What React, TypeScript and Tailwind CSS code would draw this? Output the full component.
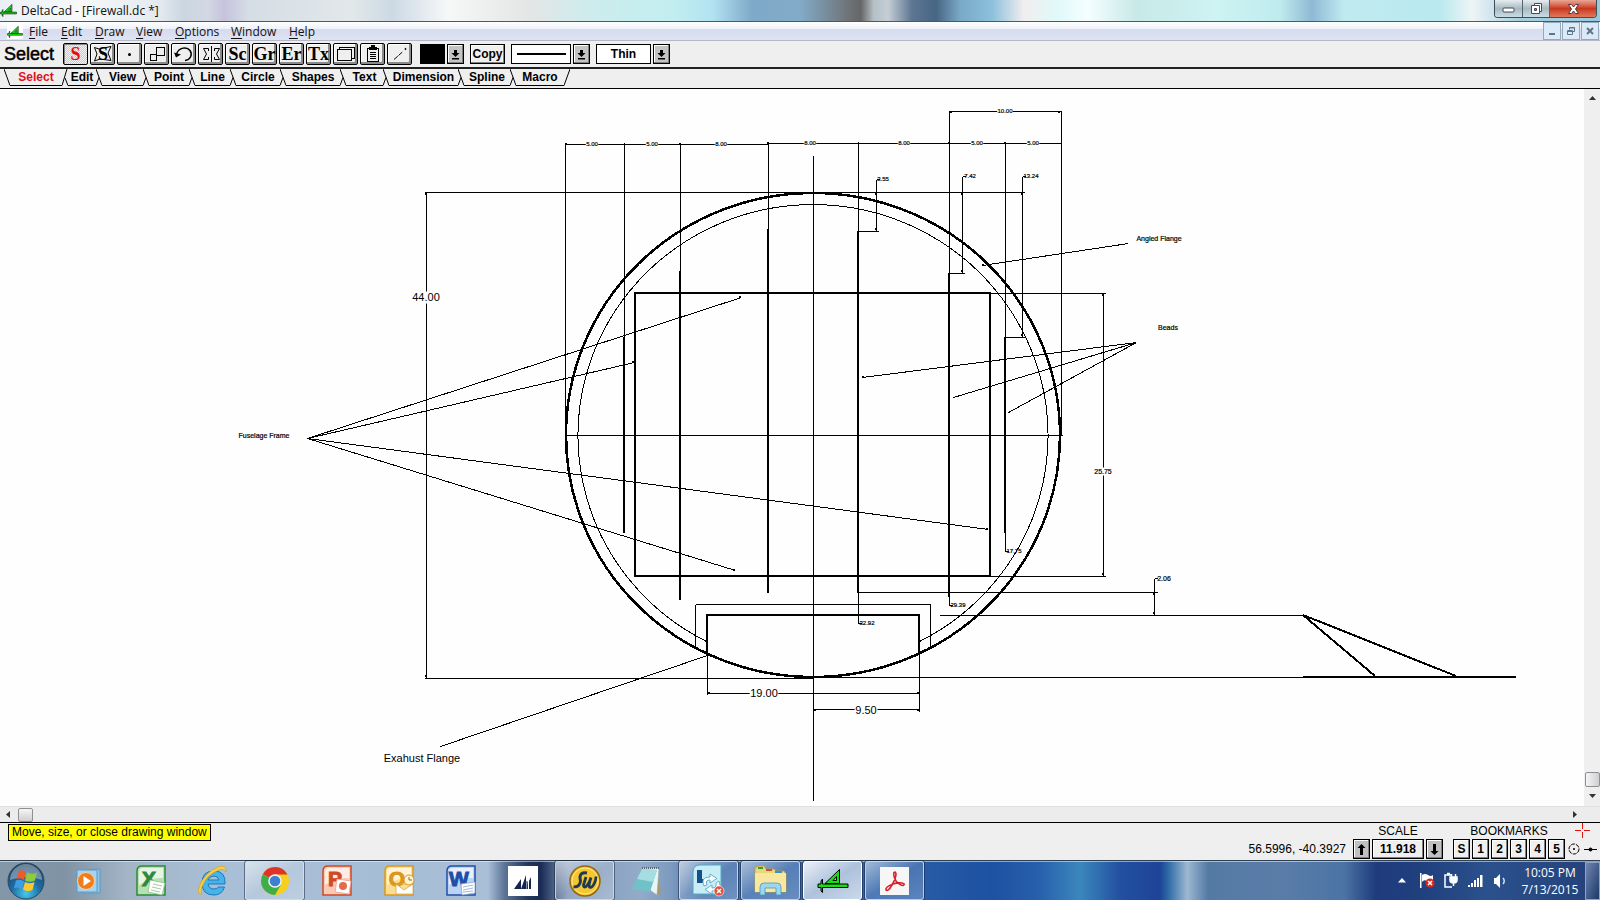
import React, { useState } from 'react';
import clsx from 'clsx';

const menus = [
  { label: 'File', width: 'w-[32px]' },
  { label: 'Edit', width: 'w-[34px]' },
  { label: 'Draw', width: 'w-[41px]' },
  { label: 'View', width: 'w-[39px]' },
  { label: 'Options', width: 'w-[56px]' },
  { label: 'Window', width: 'w-[58px]' },
  { label: 'Help', width: 'w-[40px]' },
];

const tabs = [
  { label: 'Select', width: 'w-[52px]' },
  { label: 'Edit', width: 'w-[28px]' },
  { label: 'View', width: 'w-[41px]' },
  { label: 'Point', width: 'w-[40px]' },
  { label: 'Line', width: 'w-[35px]' },
  { label: 'Circle', width: 'w-[44px]' },
  { label: 'Shapes', width: 'w-[54px]' },
  { label: 'Text', width: 'w-[37px]' },
  { label: 'Dimension', width: 'w-[69px]' },
  { label: 'Spline', width: 'w-[46px]' },
  { label: 'Macro', width: 'w-[48px]' },
];

// T-square and triangle used by the title bar, the menu bar and the taskbar
function DeltaLogo({ className }: { className?: string }) {
  return (
    <svg viewBox="0 0 32 24" className={className} fill="#14e014" stroke="#000" strokeWidth="1">
      <path d="M8 14.500 22.500 .5V14.500ZM16 11.500H19.500V7.500Z" fillRule="evenodd" />
      <path d="M1 15H4V12L5.500 10V15H31V18.500H5.500V23.500L4 22V18.500H1Z" />
    </svg>
  );
}

/* ---------- title bar ---------- */

function TitleBar() {
  return (
    <header className="flex h-[22px] shrink-0 items-start justify-between border-b border-[#50585f] bg-[linear-gradient(90deg,#e9f0f5_0%,#f7f9fa_5%,#e3eaef_10%,#cbd6e0_11.500%,#d3d8e4_13%,#c5c3dc_14%,#d5dde5_15.500%,#e2e8ea_22%,#ccd9e4_24.500%,#f6f8f8_28%,#e4e5e5_33%,#cdeced_37%,#c2eef0_42%,#b3e3f2_44.500%,#7fa9c8_47%,#82abc8_50%,#737d84_52.500%,#666_53.800%,#b4bfc6_54.600%,#c5ced5_55.500%,#5d7692_57%,#476584_58.500%,#79a9c6_60%,#8cc0dc_62%,#f1eeee_64%,#e0f9f9_66%,#f5fefe_68%,#c8e9e8_71%,#cdf3f2_76%,#bfebee_80%,#8fb9d4_82%,#c0eaf0_84%,#b9e9ef_90%,#eef4f6_92%,#a7cfe0_95%,#9ac9dc_100%)]">
      <div className="flex h-[21px] items-center gap-[4px]">
        <DeltaLogo className="h-[15px] w-[17px]" />
        <h1 className="text-[12px] leading-[20px] text-[#111]">DeltaCad - [Firewall.dc *]</h1>
      </div>
      <div className="mr-[3px] flex h-[18px] overflow-hidden rounded-b-[4px] border border-t-0 border-[#3f4d58]">
        <button aria-label="Minimize" className="flex w-[28px] items-center justify-center border-r border-[#55636e] bg-gradient-to-b from-[#e6edf0] via-[#a9b9c2] to-[#c9dde4]">
          <svg width="13" height="6" className="mt-[3px]">
            <rect x="1" y="1" width="11" height="4" rx="1" fill="#fff" stroke="#444b55" />
          </svg>
        </button>
        <button aria-label="Restore" className="flex w-[27px] items-center justify-center border-r border-[#55636e] bg-gradient-to-b from-[#e6edf0] via-[#a9b9c2] to-[#c9dde4]">
          <svg width="13" height="13" fill="#fff" stroke="#444b55">
            <path d="M4.500 1.500H11.500V9.500H4.500Z" />
            <path d="M1.500 3.500H9.500V11.500H1.500Z" />
            <path d="M4.500 6.500H6.500V8.500H4.500Z" fill="#8b98a3" />
          </svg>
        </button>
        <button aria-label="Close" className="flex w-[46px] items-center justify-center bg-gradient-to-b from-[#e9a695] via-[#c8371c] to-[#e2785a]">
          <svg width="13" height="12">
            <path d="M1.500 1.500H4.500L6.500 4 8.500 1.500H11.500L8.500 6 11.500 10.500H8.500L6.500 8 4.500 10.500H1.500L4.500 6Z" fill="#fff" stroke="#54383c" />
          </svg>
        </button>
      </div>
    </header>
  );
}

function MenuBar() {
  return (
    <nav className="flex h-[19px] shrink-0 items-center justify-between border-b border-[#b4b8c6] bg-[linear-gradient(180deg,#fff_0%,#eef1f8_38%,#d5dcee_40%,#dfe4f3_100%)]">
      <div className="flex items-center pl-[7px]">
        <span className="mr-[6px] flex h-[16px] w-[16px] items-end bg-white">
          <DeltaLogo className="h-[14px] w-[16px]" />
        </span>
        {menus.map((menu) => (
          <button key={menu.label} className={clsx('pt-px text-left text-[12px] leading-[18px] text-[#111]', menu.width)}>
            <span className="underline underline-offset-2">{menu.label[0]}</span>
            {menu.label.slice(1)}
          </button>
        ))}
      </div>
      <div className="mr-px flex gap-px text-[#5f7488]">
        <button aria-label="Minimize drawing" className="flex h-[18px] w-[18px] items-center justify-center border border-[#93a9bd] bg-[#dce9f6]">
          <svg width="10" height="10"><path d="M2 7H8V9H2Z" fill="currentColor" /></svg>
        </button>
        <button aria-label="Restore drawing" className="flex h-[18px] w-[18px] items-center justify-center border border-[#93a9bd] bg-[#dce9f6]">
          <svg width="10" height="10" fill="none" stroke="currentColor">
            <path d="M3.500 3.500V1.500H8.500V5.500H7M3.500 2H8.500M1.500 4.500H6.500V8.500H1.500ZM1.500 5.500H6.500" />
          </svg>
        </button>
        <button aria-label="Close drawing" className="flex h-[18px] w-[18px] items-center justify-center border border-[#93a9bd] bg-[#dce9f6]">
          <svg width="10" height="10" fill="none" stroke="currentColor" strokeWidth="2">
            <path d="M2 2 8 8M8 2 2 8" />
          </svg>
        </button>
      </div>
    </nav>
  );
}

/* ---------- toolbar ---------- */

interface ToolProps {
  label: string;
  pressed?: boolean;
  children: React.ReactNode;
}

function Tool({ label, pressed, children }: ToolProps) {
  return (
    <button
      aria-label={label}
      className={clsx(
        'flex h-[22px] w-[25px] items-center justify-center rounded-[2px] border border-black',
        'font-["Liberation_Serif",serif] text-[18px] leading-[20px] font-bold',
        pressed
          ? 'bg-[repeating-conic-gradient(#c9c9c9_0_25%,#f4f4f4_0_50%)] bg-[length:2px_2px] text-[#e01010] shadow-[inset_1px_1px_0_#888]'
          : 'bg-[#efefef] text-black shadow-[inset_-2px_-2px_0_#8a8a8a,inset_1px_1px_0_#fff]'
      )}
    >
      {children}
    </button>
  );
}

function DropArrow({ label }: { label: string }) {
  return (
    <button aria-label={label} className="flex h-[20px] w-[17px] items-center justify-center border border-black bg-[#c4c4c4] shadow-[inset_-1px_-1px_0_#808080,inset_1px_1px_0_#fff]">
      <svg width="9" height="11">
        <path d="M3 1H6V4H8.500L4.500 8 .5 4H3ZM1 9H8V10.500H1Z" />
      </svg>
    </button>
  );
}

function Toolbar() {
  const [weight, setWeight] = useState('Thin');

  return (
    <div className="flex h-[28px] shrink-0 items-center border-b-2 border-[#222] bg-[#efefef]">
      <span className="w-[63px] pl-[4px] text-[18px] leading-[24px] text-black [-webkit-text-stroke:0.5px_black]">Select</span>
      <div className="flex gap-[2px]">
        <Tool label="Select single" pressed>S</Tool>
        <Tool label="Select area">
          <svg width="23" height="20" fill="none" stroke="#000" className="overflow-visible">
            <path d="M3.500 3.500 8 5 20 2.500 17 9 20 16.500 9 15 3.500 17 6 10Z" />
            <text x="7" y="16" className='font-["Liberation_Serif",serif] text-[18px] font-bold' fill="#000" stroke="none">S</text>
          </svg>
        </Tool>
        <Tool label="Select point">
          <svg width="20" height="18"><circle cx="9.500" cy="9.500" r="1.500" /></svg>
        </Tool>
        <Tool label="Move">
          <svg width="20" height="18" fill="none" stroke="#000" shapeRendering="crispEdges">
            <path d="M9.500 2.500H17.500V10.500H9.500ZM3.500 9.500H9.500V15.500H3.500Z" />
          </svg>
        </Tool>
        <Tool label="Undo">
          <svg width="22" height="18" fill="none" stroke="#000" strokeWidth="1.500">
            <path d="M3.500 9C6 2 14 1.500 17 5.500 20 10 17 15 12 15.500" />
            <path d="M1 7.500 8 9.500 3 12.500Z" fill="#000" stroke="none" />
          </svg>
        </Tool>
        <Tool label="Mirror">
          <svg width="20" height="18" fill="none" stroke="#000">
            <path d="M10.500 1V17M7.500 6V3.500H2.500L5.500 9 2.500 14.500H7.500V12M13.500 6V3.500H18.500L15.500 9 18.500 14.500H13.500V12" />
          </svg>
        </Tool>
        <Tool label="Scale">Sc</Tool>
        <Tool label="Group">Gr</Tool>
        <Tool label="Erase">Er</Tool>
        <Tool label="Text">Tx</Tool>
        <Tool label="Copy window">
          <svg width="20" height="18" fill="none" stroke="#000" shapeRendering="crispEdges">
            <path d="M1.500 4.500H15.500V15.500H1.500ZM3.500 4V2.500H18.500V13.500H16" />
          </svg>
        </Tool>
        <Tool label="Paste">
          <svg width="18" height="18" fill="none" stroke="#000" shapeRendering="crispEdges">
            <path d="M3.500 3.500H14.500V16.500H3.500Z" />
            <path d="M5 2H7V0H11V2H13V5H5Z" fill="#000" stroke="none" />
            <path d="M6 7.500H12M6 9.500H12M6 11.500H12M6 13.500H12" />
          </svg>
        </Tool>
        <Tool label="Line ends">
          <svg width="20" height="18" stroke="#000">
            <path d="M4 14.500 13 6.500" strokeDasharray="5 1" />
            <circle cx="15.500" cy="4" r=".6" />
          </svg>
        </Tool>
      </div>
      <div className="ml-[8px] flex items-center gap-[2px]">
        <button aria-label="Colour" className="h-[20px] w-[25px] bg-black" />
        <DropArrow label="Choose colour" />
        <button className="mx-[4px] h-[20px] w-[35px] border border-black bg-[#efefef] text-[12px] leading-[17px] font-bold shadow-[inset_-1px_-1px_0_#808080,inset_1px_1px_0_#fff]">
          Copy
        </button>
        <button aria-label="Line style" className="flex h-[20px] w-[60px] items-center justify-center border border-black bg-white">
          <span className="h-[2px] w-[49px] bg-black" />
        </button>
        <DropArrow label="Choose line style" />
        <select
          aria-label="Line weight"
          value={weight}
          onChange={(e) => setWeight(e.target.value)}
          className="ml-[4px] h-[20px] w-[55px] appearance-none rounded-none border border-black bg-white text-center text-[12px] leading-[17px] font-bold"
        >
          <option>Thin</option>
          <option>Medium</option>
          <option>Thick</option>
        </select>
        <DropArrow label="Choose line weight" />
      </div>
    </div>
  );
}

function TabBar() {
  const [active, setActive] = useState('Select');

  return (
    <div className="flex h-[20px] shrink-0 border-b border-black bg-[#efefef] pl-[4px]">
      <svg width="6" height="17" stroke="#000" fill="none"><path d="M0 0 6 16.500" /></svg>
      {tabs.map((tab, i) => (
        <React.Fragment key={tab.label}>
          <button
            onClick={() => setActive(tab.label)}
            className={clsx(
              'h-[17px] border-b border-black text-center text-[12px] leading-[14px] font-bold',
              tab.width,
              active === tab.label ? 'text-[#e0101c]' : 'text-black'
            )}
          >
            {tab.label}
          </button>
          <svg width="6" height="17" stroke="#000" fill="none">
            {i === 0 && <path d="M0 16.500 5 0M3 9 6 16.500" />}
            {i > 0 && i < tabs.length - 1 && <path d="M0 0 6 16.500M0 16.500 3 8.500" />}
            {i === tabs.length - 1 && <path d="M0 16.500 6 0" />}
          </svg>
        </React.Fragment>
      ))}
    </div>
  );
}

/* ---------- drawing ---------- */

// [x1, y1, x2, y2]
type Segment = [number, number, number, number];

const thinLines: Segment[] = [
  // axes
  [565, 435, 1062, 435], [813, 155, 813, 800],
  // dimension row above the circle
  [565, 143, 565, 435], [624, 142, 624, 337], [680, 142, 680, 271], [768, 141, 768, 229],
  [858, 141, 858, 231], [949, 110, 949, 273], [1005, 141, 1005, 337], [1061, 110, 1061, 435],
  [565, 144, 768, 144], [768, 143, 1061, 143], [949, 111, 1061, 111],
  // stepped bead offsets
  [876, 179, 876, 231], [858, 231, 878, 231], [876, 179, 879, 179],
  [962, 176, 962, 273], [949, 273, 964, 273], [962, 176, 965, 176],
  [1022, 176, 1022, 337], [1005, 337, 1024, 337], [1022, 176, 1025, 176],
  // overall height
  [424, 192, 1024, 192], [426, 192, 426, 678], [424, 678, 813, 678], [813, 677, 1303, 677],
  // frame height
  [990, 293, 1105, 293], [990, 576, 1105, 576], [1103, 293, 1103, 576],
  // exhaust offset
  [858, 592, 1157, 592], [939, 615, 1303, 615], [1154, 578, 1154, 615], [1154, 578, 1157, 578],
  // bead lengths
  [858, 592, 858, 623], [858, 623, 861, 623], [949, 596, 949, 605], [949, 605, 952, 605],
  [1005, 532, 1005, 551], [1005, 551, 1008, 551],
  // exhaust cut-out
  [695, 604, 930, 604], [695, 604, 695, 648], [930, 604, 930, 648],
  [707, 654, 707, 694], [919, 654, 919, 711], [707, 693, 919, 693], [813, 709, 919, 709],
];

const leaders: Segment[] = [
  [307, 438, 741, 297], [307, 438, 634, 362], [307, 438, 988, 529], [307, 438, 735, 570],
  [1128, 243, 982, 265], [1136, 342, 862, 377], [1136, 342, 953, 397], [1136, 342, 1008, 412],
  [440, 746, 707, 655],
];

const thickLines: Segment[] = [
  [624, 337, 624, 533], [680, 271, 680, 600], [768, 229, 768, 593], [858, 231, 858, 593],
  [949, 273, 949, 597], [1005, 337, 1005, 533], [1303, 677, 1516, 677],
  [1303, 615, 1375, 676], [1303, 615, 1456, 676],
];

const arrowTips = [
  [566, 144], [680, 144], [768, 143], [949, 143], [1005, 143], [951, 112], [1059, 112], [876, 194], [876, 229],
  [962, 194], [962, 271], [1022, 194], [1022, 335], [1103, 295], [1103, 574], [426, 194], [426, 676],
  [709, 693], [918, 693], [815, 710], [918, 710], [1154, 594], [1154, 613],
  [740, 297], [633, 362], [987, 529], [734, 570], [983, 265], [863, 377],
];

// "gap" marks the texts that break the line they sit on
const labels = [
  { text: '5.00', x: 592, y: 144, size: 6, gap: true },
  { text: '5.00', x: 652, y: 144, size: 6, gap: true },
  { text: '8.00', x: 721, y: 144, size: 6, gap: true },
  { text: '8.00', x: 810, y: 143, size: 6, gap: true },
  { text: '8.00', x: 904, y: 143, size: 6, gap: true },
  { text: '5.00', x: 977, y: 143, size: 6, gap: true },
  { text: '5.00', x: 1033, y: 143, size: 6, gap: true },
  { text: '10.00', x: 1005, y: 111, size: 6, gap: true },
  { text: '3.55', x: 883, y: 179, size: 6 },
  { text: '7.42', x: 970, y: 176, size: 6 },
  { text: '13.24', x: 1031, y: 176, size: 6 },
  { text: '17.75', x: 1014, y: 551, size: 6 },
  { text: '32.92', x: 867, y: 623, size: 6 },
  { text: '29.39', x: 958, y: 605, size: 6 },
  { text: '2.06', x: 1164, y: 578, size: 7 },
  { text: '25.75', x: 1103, y: 471, size: 7, gap: true },
  { text: '44.00', x: 426, y: 297, size: 11, gap: true },
  { text: '19.00', x: 764, y: 693, size: 11, gap: true },
  { text: '9.50', x: 866, y: 710, size: 11, gap: true },
  { text: 'Fuselage Frame', x: 264, y: 435, size: 7 },
  { text: 'Angled Flange', x: 1159, y: 238, size: 7 },
  { text: 'Beads', x: 1168, y: 327, size: 7 },
  { text: 'Exahust Flange', x: 422, y: 758, size: 11 },
];

const labelClass: Record<number, string> = {
  6: 'text-[6px] [stroke:#000] [stroke-width:0.2px]',
  7: 'text-[7px] [stroke:#000] [stroke-width:0.2px]',
  11: 'text-[11px]',
};

function segmentsToPath(segments: Segment[]) {
  return segments.map(([x1, y1, x2, y2]) => `M${x1} ${y1}L${x2} ${y2}`).join('');
}

function Drawing() {
  return (
    <svg className="block h-full w-full" role="img" aria-label="Firewall drawing">
      {/* drawing units are screen pixels, shifted up by the height of the bars */}
      <g transform="translate(0.5 -88.5)" fill="none" stroke="#000" shapeRendering="crispEdges">
        <path d={segmentsToPath(thinLines)} />
        <path d={segmentsToPath(leaders)} />
        <path d="M706 641A235 231 0 1 1 919 641" />
      </g>
      <g transform="translate(0 -89)" fill="none" stroke="#000" strokeWidth="2" shapeRendering="crispEdges">
        <ellipse cx="813" cy="435" rx="247" ry="242" strokeWidth="2.500" />
        <path d="M635 293H990V576H635Z" />
        <path d="M707 654V615H919V654" />
        <path d={segmentsToPath(thickLines)} />
      </g>
      <g transform="translate(0 -89)">
        {arrowTips.map(([x, y]) => (
          <rect key={`${x}-${y}`} x={x - 1} y={y - 1} width="2" height="2" />
        ))}
        {labels.map(({ text, x, y, size, gap }) => {
          const w = text.length * size * 0.52;
          return (
            <g key={`${x}-${y}`}>
              {gap && <rect x={x - w / 2} y={y - size / 2} width={w} height={size + 1} fill="#fff" />}
              <text x={x} y={y + size * 0.36} textAnchor="middle" className={labelClass[size]}>
                {text}
              </text>
            </g>
          );
        })}
      </g>
    </svg>
  );
}

function DrawingWindow() {
  return (
    <main className="flex min-h-0 flex-1 flex-col bg-[#ececec]">
      <div className="flex min-h-0 flex-1">
        <div className="min-w-0 flex-1 overflow-hidden bg-[#fefefe]">
          <Drawing />
        </div>
        <div className="flex w-[16px] flex-col items-center justify-between bg-[#efefef] pt-[5px] pb-[7px]">
          <button aria-label="Scroll up">
            <svg width="7" height="7"><path d="M3.500 2 7 6H0Z" fill="#333" /></svg>
          </button>
          <div className="flex flex-col items-center gap-[7px]">
            <button aria-label="Vertical position" className="h-[15px] w-[15px] rounded-[2px] border border-[#8f8f8f] bg-gradient-to-r from-[#f5f5f5] to-[#cfcfd3]" />
            <button aria-label="Scroll down">
              <svg width="7" height="5"><path d="M3.500 4 7 0H0Z" fill="#333" /></svg>
            </button>
          </div>
        </div>
      </div>
      <div className="flex h-[16px] shrink-0 items-center justify-between border-t border-[#e0e0e0] pr-[23px] pl-[6px]">
        <div className="flex items-center gap-[7px]">
          <button aria-label="Scroll left">
            <svg width="5" height="7"><path d="M0 3.500 4 0V7Z" fill="#333" /></svg>
          </button>
          <button aria-label="Horizontal position" className="h-[14px] w-[15px] rounded-[2px] border border-[#8f8f8f] bg-gradient-to-b from-[#f5f5f5] to-[#cfcfd3]" />
        </div>
        <button aria-label="Scroll right">
          <svg width="5" height="7"><path d="M5 3.500 1 0V7Z" fill="#333" /></svg>
        </button>
      </div>
    </main>
  );
}

/* ---------- status bar ---------- */

const statusButton =
  'flex h-[20px] items-center justify-center border border-black text-[12px] leading-[18px] font-bold shadow-[inset_-1px_-1px_0_#808080,inset_1px_1px_0_#fff]';

function StatusBar() {
  return (
    <footer className="flex h-[38px] shrink-0 justify-between border-t border-black bg-[#efefef] pr-[3px] pl-[8px] text-[12px] text-black">
      <p className="mt-px h-[17px] border border-black bg-[#ffff00] px-[3px] leading-[15px]">Move, size, or close drawing window</p>
      <div className="flex items-end pb-px">
        <span className="mr-[7px] leading-[20px]">56.5996, -40.3927</span>
        <div className="mr-[10px]">
          <div className="text-center leading-[16px]">SCALE</div>
          <div className="flex gap-[2px]">
            <button aria-label="Scale up" className={clsx(statusButton, 'w-[17px] bg-[#c0c0c0]')}>
              <svg width="9" height="11"><path d="M4.500 0 8.500 4H6V11H3V4H.5Z" /></svg>
            </button>
            <button className={clsx(statusButton, 'w-[52px]')}>11.918</button>
            <button aria-label="Scale down" className={clsx(statusButton, 'w-[17px] bg-[#c0c0c0]')}>
              <svg width="9" height="11"><path d="M4.500 11 .5 7H3V0H6V7H8.500Z" /></svg>
            </button>
          </div>
        </div>
        <div className="mr-[3px]">
          <div className="text-center leading-[16px]">BOOKMARKS</div>
          <div className="flex gap-[2px]">
            {['S', '1', '2', '3', '4', '5'].map((mark) => (
              <button key={mark} className={clsx(statusButton, 'w-[17px]')}>{mark}</button>
            ))}
          </div>
        </div>
        <div className="flex flex-col items-end">
          <svg width="22" height="16" stroke="#e01010" shapeRendering="crispEdges">
            <path d="M0 7.500H6M9 7.500H15M7.500 0V6M7.500 9V15" />
          </svg>
          <div className="flex h-[20px] items-center gap-[4px]">
            <svg width="12" height="12" fill="none" stroke="#000">
              <circle cx="6" cy="6" r="5" strokeDasharray="4 1" />
              <circle cx="6" cy="6" r=".6" fill="#000" />
            </svg>
            <svg width="13" height="12" stroke="#000">
              <path d="M0 6.500H13" />
              <circle cx="6.500" cy="6.500" r="1.500" />
            </svg>
          </div>
        </div>
      </div>
    </footer>
  );
}

/* ---------- taskbar ---------- */

function OfficeIcon({ letter, color, light }: { letter: string; color: string; light: string }) {
  return (
    <svg width="30" height="31" viewBox="0 0 30 31" className='overflow-visible font-["Liberation_Sans",Arial,sans-serif]'>
      <path d="M6 1H29V30H1V6Q1 1 6 1Z" fill={light} stroke={color} strokeWidth="1.500" />
      <path d="M7 3H27V13Q14 12 3 20V7Q3 3 7 3Z" fill="#fff" opacity=".65" />
      <text x="13" y="21" textAnchor="middle" fontSize="21" fontWeight="bold" fill={color} stroke={color}>{letter}</text>
      {letter === 'X' && <path d="M14 15 29 18 26 30 12 27ZM17 19 26 21M16 22 25 24M15 25 24 27" fill="#fff" stroke="#8bbd8a" strokeWidth=".8" />}
      {letter === 'W' && <path d="M15 19 29 17V28L16 30ZM17 22 27 20M17 25 27 23M17 27 27 26" fill="#fff" stroke="#8ba5d4" strokeWidth=".8" />}
      {letter === 'P' && (
        <g>
          <path d="M15 14 29 16 27 29 13 27Z" fill="#fff" stroke="#e9a08c" strokeWidth=".8" />
          <circle cx="21" cy="21" r="4" fill="#e5694b" />
        </g>
      )}
      {letter === 'O' && (
        <g>
          <path d="M12 19H29V29H12ZM12 19 20 25 29 19" fill="#fff" stroke="#dca74c" strokeWidth=".8" />
          <circle cx="25" cy="15" r="5" fill="#fff4cf" stroke="#d69a2a" />
          <path d="M25 12V15H28" fill="none" stroke="#a66d12" />
        </g>
      )}
    </svg>
  );
}

function StartOrb() {
  return (
    <svg width="38" height="38" viewBox="0 0 38 38">
      <defs>
        <radialGradient id="orb" cx="50%" cy="85%" r="80%">
          <stop offset="0" stopColor="#46c8ec" />
          <stop offset=".5" stopColor="#1f6ca6" />
          <stop offset="1" stopColor="#21415e" />
        </radialGradient>
      </defs>
      <circle cx="19" cy="19" r="18" fill="url(#orb)" stroke="#274b66" />
      <path d="M3 18A16 16 0 0 1 35 18Q19 12 3 18Z" fill="#fff" opacity=".35" />
      <path d="M12 9Q15 7 19 10L17 18Q13 15 9 17Z" fill="#ee5a28" />
      <path d="M20 10.500Q25 13 30 10.500L28 18.500Q23 21 18 18.500Z" fill="#8fcb3c" />
      <path d="M9 18.500Q13 16.500 17 19.500L15 27Q11 24.500 7 26Z" fill="#3f9ee0" />
      <path d="M18 20Q23 22.500 27.500 20L25.500 28Q20.500 30.500 16 27.500Z" fill="#fcc92c" />
    </svg>
  );
}

const taskItems: { name: string; state?: 'open' | 'active'; icon: React.ReactNode }[] = [
  {
    name: 'Media Player',
    icon: (
      <svg width="28" height="26" viewBox="0 0 28 26">
        <path d="M8 2 25 1V25H8Z" fill="#8cc4e8" stroke="#5a9cc8" />
        <path d="M2 2H22V24H2Z" fill="#a5d3f0" stroke="#5a9cc8" />
        <circle cx="11" cy="13" r="8.500" fill="#f07d1c" stroke="#fbd0a0" />
        <path d="M8.500 8 16 13 8.500 18Z" fill="#fff" />
      </svg>
    ),
  },
  { name: 'Excel', icon: <OfficeIcon letter="X" color="#2c8a3a" light="#b9e0b0" /> },
  {
    name: 'Internet Explorer',
    icon: (
      <svg width="32" height="32" viewBox="0 0 32 32">
        <path d="M28 19H11Q12 24 17 24 20 24 21.500 22H27.500Q25 30 17 30 5 30 5 18 5 6 17 6 29 6 28 19ZM11 15H22Q21 11 17 11 12 11 11 15Z" fill="#45b4ec" stroke="#1d78bc" fillRule="evenodd" />
        <path d="M5 29Q0 30 2 22 7 8 21 2 30-1 29 7 28 3 22 5 9 10 5 22 3 27 5 29Z" fill="#f8cf3c" stroke="#d09c18" strokeWidth=".6" />
      </svg>
    ),
  },
  {
    name: 'Chrome',
    state: 'open',
    icon: (
      <svg width="30" height="30" viewBox="0 0 30 30">
        <circle cx="15" cy="15" r="14" fill="#f7cf1d" />
        <path d="M15 15 2.900 8A14 14 0 0 0 15 29L21 18.500Z" fill="#3fae49" />
        <path d="M15 15 2.900 8A14 14 0 0 1 27.500 8.500H15Z" fill="#dc3428" />
        <circle cx="15" cy="15" r="6.800" fill="#f4f4f4" />
        <circle cx="15" cy="15" r="5.300" fill="#3c80d2" />
      </svg>
    ),
  },
  { name: 'PowerPoint', icon: <OfficeIcon letter="P" color="#cf4a26" light="#fbc9b5" /> },
  { name: 'Outlook', icon: <OfficeIcon letter="O" color="#dd951c" light="#fbdf8e" /> },
  { name: 'Word', icon: <OfficeIcon letter="W" color="#1f4fa8" light="#bcd4f3" /> },
  {
    name: 'Dynamics',
    icon: (
      <svg width="30" height="30" viewBox="0 0 30 30">
        <path d="M0 0H30V30H0Z" fill="#fff" />
        <path d="M6 23 13 13V23ZM13 23 18 9V23ZM18.500 23V15Q20 13 20 23ZM21 23V15L23 11V23Z" fill="#14264e" />
      </svg>
    ),
  },
  {
    name: 'Simply Wall',
    state: 'open',
    icon: (
      <svg width="32" height="32" viewBox="0 0 32 32">
        <circle cx="16" cy="16" r="15" fill="#f6c630" stroke="#96650e" strokeWidth="1.500" />
        <circle cx="16" cy="16" r="13" fill="none" stroke="#fde68c" />
        <path d="M18 8Q12 7 11 11.500 11 14 11.500 16 11 22 4.500 22" fill="none" stroke="#1f3a50" strokeWidth="3" />
        <path d="M17 12 14.500 20Q14.500 23 17 21.500 20 19 22 12.500 19.500 20 20.500 22 23 23.500 25.500 18 27 15 27 11.500" fill="none" stroke="#1f3a50" strokeWidth="2.800" />
      </svg>
    ),
  },
  {
    name: 'Notepad',
    icon: (
      <svg width="32" height="30" viewBox="0 0 32 30">
        <path d="M25 2 30 27 25 29 21 25Z" fill="#a99867" />
        <path d="M11 2H28L26 29 20 25Z" fill="#e9f4f4" stroke="#98a8a8" strokeWidth=".6" />
        <path d="M11 3 26 4 19 26 1 23Z" fill="#6fc2c8" />
        <path d="M11 3 26 4 22 16 6 13Z" fill="#a5dde0" />
        <path d="M11 2H28" stroke="#5c6a70" strokeWidth="2" strokeDasharray="1 1" />
      </svg>
    ),
  },
  {
    name: 'Lync',
    state: 'open',
    icon: (
      <svg width="33" height="33" viewBox="0 0 33 33">
        <path d="M8 1H29V30H1V8Q1 1 8 1Z" fill="#c9edf5" stroke="#51aac4" />
        <path d="M5 6H10V15H15V19H5Z" fill="#14508c" />
        <path d="M12 22Q8 13 18 13V10L25 14.500 18 19V16Q13 16 15 21ZM27 17Q31 27 20 27V30L13 25.500 20 21V24Q25 24 24 19Z" fill="#f4fcfe" stroke="#4fa2c0" strokeWidth=".8" />
        <circle cx="27" cy="27" r="5" fill="#e0523a" stroke="#fff" strokeWidth=".6" />
        <path d="M25 25 29 29M29 25 25 29" stroke="#fff" strokeWidth="1.500" />
      </svg>
    ),
  },
  {
    name: 'Explorer',
    state: 'open',
    icon: (
      <svg width="33" height="32" viewBox="0 0 33 32">
        <path d="M1 3 4 1H10L12 4H20L22 6H30L32 9V27H1Z" fill="#ecd67c" stroke="#b99d3f" strokeWidth=".8" />
        <path d="M4 2H9V4H4Z" fill="#3c9a3c" />
        <path d="M12 4H18V6H12Z" fill="#d0502c" />
        <path d="M21 6H28V8H21Z" fill="#3490d8" />
        <path d="M1 8H32V27H1Z" fill="#f8e89f" />
        <path d="M6 30V22Q6 18 10 18H23Q27 18 27 22V30H22V23H11V30Z" fill="#9ed6f0" stroke="#4795c4" strokeWidth=".8" />
      </svg>
    ),
  },
  { name: 'DeltaCad', state: 'active', icon: <DeltaLogo className="h-[24px] w-[32px]" /> },
  {
    name: 'Acrobat Reader',
    state: 'open',
    icon: (
      <svg width="29" height="28" viewBox="0 0 29 28">
        <path d="M0 0H29V28H0Z" fill="#f6f6f6" />
        <path d="M6 23Q5 20 13 17 17 15.500 22 16 26 17 23 18.500 20 18.500 16 14 13 9 14 5.500 15.500 4 16 7 16 11 12 18 8 25 6 23Z" fill="none" stroke="#d8202a" strokeWidth="1.600" />
      </svg>
    ),
  },
];

function Tray() {
  return (
    <div className="flex items-center text-white">
      <button aria-label="Show hidden icons" className="mr-[13px]">
        <svg width="8" height="5"><path d="M4 0 8 4.500H0Z" fill="#fff" /></svg>
      </button>
      <svg width="16" height="17" className="mr-[8px]">
        <path d="M1 1H2.500V16H1Z" fill="#fff" />
        <path d="M3 3Q6 1 9 3T14 3V9Q11 11 8 9T3 10Z" fill="#fff" />
        <circle cx="11" cy="11" r="4.500" fill="#d8281e" />
        <path d="M9 9 13 13M13 9 9 13" stroke="#fff" strokeWidth="1.500" />
      </svg>
      <svg width="15" height="17" className="mr-[9px]" fill="none" stroke="#fff" strokeWidth="1.500">
        <path d="M9 3H2V15H9M4 1.500H7" />
        <path d="M7 5H14V8Q14 11 10.500 11T7 8ZM8.500 2V5M12.500 2V5M10.500 11V14" fill="#fff" />
      </svg>
      <svg width="17" height="14" className="mr-[9px]" fill="#fff">
        <path d="M1 11H3V13H1ZM4 9H6V13H4ZM7 6H9V13H7ZM10 4H12V13H10ZM13 1H15.500V13H13Z" />
      </svg>
      <svg width="14" height="16" className="mr-[14px]">
        <path d="M1 5H3L7 1V15L3 11H1Z" fill="#fff" />
        <path d="M10 5Q12.500 8 10 11" fill="none" stroke="#cfe0f4" strokeWidth="1.500" />
      </svg>
      <div className="w-[58px] text-center text-[12px] leading-[17px]">
        <div>10:05 PM</div>
        <div>7/13/2015</div>
      </div>
      <button aria-label="Show desktop" className="ml-[6px] h-[38px] w-[15px] border border-[#8ea3c4] bg-gradient-to-br from-[#7288b0] to-[#1d3768]" />
    </div>
  );
}

function Taskbar() {
  return (
    <nav className="flex h-[40px] shrink-0 items-center justify-between border-t border-[#2d3f50] bg-[linear-gradient(90deg,#8497a8_0%,#7f93a5_4%,#a3b5c6_8%,#a9bfd6_14%,#a6bdd6_25%,#a9bfd7_30.500%,#5f7698_31.500%,#22355d_33%,#1a2c54_33.800%,#8098b8_35.500%,#93abc9_40%,#7c99bf_42%,#4270ac_44%,#2e62a8_55%,#1d51a2_62%,#2860ac_65%,#3b87bd_67.500%,#2350a0_70%,#1e4398_72.500%,#2c6aa4_73%,#9db8d2_74.200%,#547aa4_75.500%,#5a7da8_80%,#4b74a4_84%,#1f3b7c_86%,#20407e_89%,#2b518c_93%,#24407a_100%)] shadow-[inset_0_1px_0_rgba(255,255,255,0.5)]">
      <div className="flex items-center">
        <button aria-label="Start" className="mr-[14px] ml-[7px]"><StartOrb /></button>
        <div className="flex gap-[3px]">
          {taskItems.map((item) => (
            <button
              key={item.name}
              aria-label={item.name}
              className={clsx(
                'flex h-[39px] w-[59px] items-center justify-center rounded-[3px] border',
                !item.state && 'border-transparent',
                item.state === 'open' && 'border-[#d3deea]/80 bg-gradient-to-br from-white/55 via-white/15 to-white/25 shadow-[0_0_0_1px_rgba(20,30,50,0.5)]',
                item.state === 'active' && 'border-white bg-gradient-to-br from-white/90 via-white/60 to-white/75 shadow-[0_0_0_1px_rgba(20,30,50,0.5)]'
              )}
            >
              {item.icon}
            </button>
          ))}
        </div>
      </div>
      <Tray />
    </nav>
  );
}

function App() {
  return (
    <div className='flex h-screen flex-col overflow-hidden bg-[#efefef] font-["Liberation_Sans",Arial,sans-serif]'>
      <div className='font-["Open_Sans","Noto_Sans",sans-serif]'>
        <TitleBar />
        <MenuBar />
      </div>
      <Toolbar />
      <TabBar />
      <DrawingWindow />
      <StatusBar />
      <div className='font-["Open_Sans","Noto_Sans",sans-serif]'>
        <Taskbar />
      </div>
    </div>
  );
}

export default App;
